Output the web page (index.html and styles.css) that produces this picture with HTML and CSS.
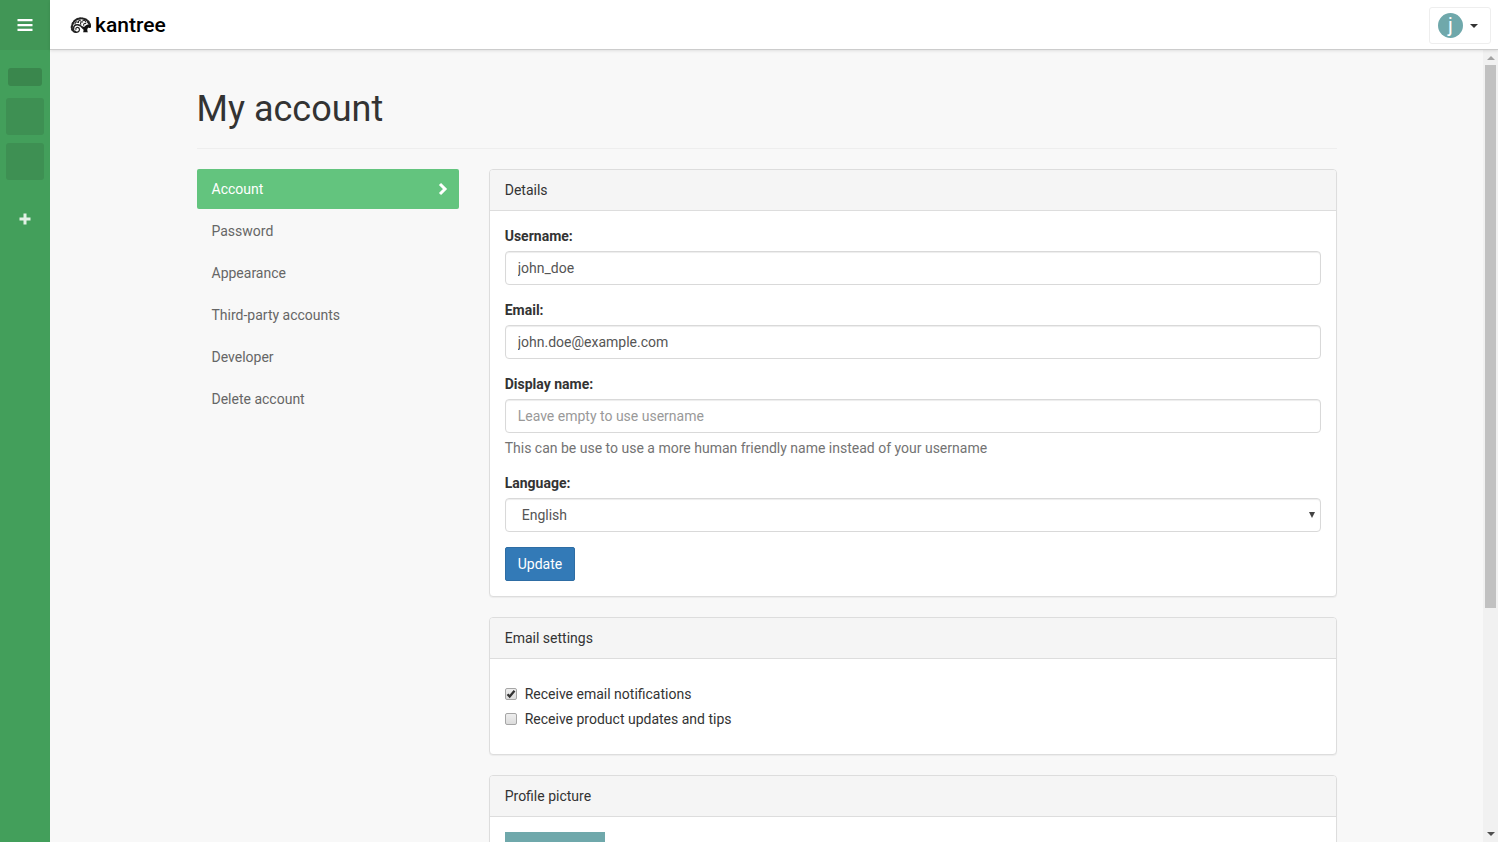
FILE: index.html
```html
<!DOCTYPE html>
<html lang="en">
<head>
<meta charset="utf-8">
<title>My account - Kantree</title>
<link rel="stylesheet" href="styles.css">
</head>
<body>
<aside class="sidebar">
  <button class="sidebar-toggle" type="button" aria-label="Menu">
    <svg width="16" height="14" viewBox="0 0 16 14"><path fill="#fff" d="M.5 1h15v2.300H.5zM.5 5.900h15v2.300H.5zM.5 10.800h15v2.300H.5z"/></svg>
  </button>
  <div class="org-label"></div>
  <div class="project-tile"></div>
  <div class="project-tile"></div>
  <button class="sidebar-add" type="button" aria-label="Add">
    <svg width="12" height="12" viewBox="0 0 12 12"><path fill="#e3f1e6" d="M4.500 .5h3v4h4v3h-4v4h-3v-4h-4v-3h4z"/></svg>
  </button>
</aside>
<div class="page">
  <header class="topbar">
    <a class="logo" href="#">
      <svg class="logo-tree" width="22" height="18" viewBox="0 0 22 18">
        <g fill="none" stroke="#222" stroke-linecap="round">
          <path stroke-width="2.200" stroke-dasharray="1.600 1.500" d="M5.500 15.800C2.500 15.300 1.200 12.600 2 9.800 3 5.200 6.500 2.600 10.800 2.400c4.700-.1 8.200 2.400 9.200 6.900"/>
          <path stroke-width="1.200" d="M6 16.300c3 .3 4.400-2.600 2.900-4.300-1.300-1.300-3.500-.4-3 1.300"/>
          <path stroke-width="1.500" d="M3.600 13.300C3.200 10.300 5 8.600 7.500 8.700c2.800.1 4.600 2 6 4"/>
          <path stroke-width="1.100" d="M5 8C4.800 6.300 6.200 5.300 7.500 6.200M8.500 6.500C8 4.800 9.500 4 10.600 4.900M10.800 8.300c-.9-1.600.5-3 1.900-2.300M13 4.600c1.300-.7 2.500 0 2.500 1.200M13.700 9.300c-.3-1.400.9-2.400 2-1.900M17 6c1.200.2 1.700 1.300 1.200 2.200"/>
        </g>
        <path fill="#111" d="M12.300 10c1.300 1 2 1.200 2.500.3.900-1.400 2.700-2 4.700-1.300 1.300.3 1.700 1.200 1.500 2.200-.3 1-1.600 1.100-2.200.3-1.200.5-1.600 1.400-1.500 2.400 0 1 .2 1.600.6 2.300h-4.800c.8-1.700.6-3.300-.8-6.200z"/>
      </svg>
      <span>kantree</span>
    </a>
    <button class="user-menu" type="button"><span class="avatar">j</span><span class="caret"></span></button>
  </header>
  <div class="viewport">
    <main class="content">
      <div class="container">
        <h1>My account</h1>
        <div class="columns">
          <nav class="menu">
            <a class="active" href="#">Account
              <svg width="10" height="14" viewBox="0 0 10 14"><path d="M2 2l5 5-5 5" fill="none" stroke="#fff" stroke-width="3"/></svg>
            </a>
            <a href="#">Password</a>
            <a href="#">Appearance</a>
            <a href="#">Third-party accounts</a>
            <a href="#">Developer</a>
            <a href="#">Delete account</a>
          </nav>
          <div class="panels">
            <section class="panel">
              <h2>Details</h2>
              <form class="panel-body">
                <div class="field">
                  <label for="username">Username:</label>
                  <input class="control" id="username" type="text" value="john_doe">
                </div>
                <div class="field">
                  <label for="email">Email:</label>
                  <input class="control" id="email" type="email" value="john.doe@example.com">
                </div>
                <div class="field">
                  <label for="display">Display name:</label>
                  <input class="control" id="display" type="text" placeholder="Leave empty to use username">
                  <p class="help">This can be use to use a more human friendly name instead of your username</p>
                </div>
                <div class="field">
                  <label for="language">Language:</label>
                  <select class="control" id="language"><option>English</option></select>
                </div>
                <button class="update" type="button">Update</button>
              </form>
            </section>
            <section class="panel">
              <h2>Email settings</h2>
              <div class="panel-body checks">
                <label><input type="checkbox" checked>Receive email notifications</label>
                <label><input type="checkbox">Receive product updates and tips</label>
              </div>
            </section>
            <section class="panel">
              <h2>Profile picture</h2>
              <div class="panel-body"><div class="picture"></div></div>
            </section>
          </div>
        </div>
      </div>
    </main>
    <div class="scrollbar" aria-hidden="true">
      <span class="arrow up"></span>
      <div class="track"><div class="thumb"></div></div>
      <span class="arrow down"></span>
    </div>
  </div>
</div>
</body>
</html>
```
FILE: styles.css
```css
* { box-sizing: border-box; }
body {
  margin: 0;
  height: 100vh;
  display: flex;
  overflow: hidden;
  background: #f8f8f8;
  color: #333;
  font: 14px/20px Roboto, "Liberation Sans", sans-serif;
}
button, input, select { font: inherit; margin: 0; }
button { cursor: pointer; }
a { color: inherit; text-decoration: none; }

.sidebar {
  flex: none;
  width: 50px;
  display: flex;
  flex-direction: column;
  align-items: center;
  background: #439f5b;
}
.sidebar button {
  border: 0;
  padding: 0;
  width: 100%;
  display: flex;
  align-items: center;
  justify-content: center;
  background: none;
}
.sidebar .sidebar-toggle { height: 50px; background: #419656; }
.org-label {
  width: 34px;
  height: 18px;
  margin: 18px 0 12px;
  border-radius: 3px;
  background: #3a874d;
}
.project-tile {
  width: 38px;
  height: 37px;
  margin-bottom: 8px;
  border-radius: 3px;
  background: #3e9053;
}
.sidebar .sidebar-add { height: 40px; margin-top: 11px; }

.page { flex: 1; min-width: 0; display: flex; flex-direction: column; }
.topbar {
  flex: none;
  height: 50px;
  display: flex;
  align-items: center;
  justify-content: space-between;
  padding: 0 7px 0 20px;
  background: #fff;
  border-bottom: 1px solid #ccc;
  box-shadow: 0 1px 3px rgba(0, 0, 0, .1);
  z-index: 1;
}
.logo {
  display: flex;
  align-items: center;
  gap: 3px;
  color: #000;
  font: 500 21px/28px Roboto, "Noto Sans", sans-serif;
}
.user-menu {
  width: 62px;
  height: 37px;
  margin-top: 2px;
  padding: 0 8px;
  display: flex;
  align-items: center;
  gap: 7px;
  background: #fff;
  border: 1px solid #eee;
  border-radius: 3px;
}
.avatar {
  width: 25px;
  height: 25px;
  margin-bottom: 1px;
  border-radius: 50%;
  background: #6fa8ab;
  color: #fff;
  font-size: 20px;
  line-height: 25px;
  text-align: center;
}
.caret {
  border: 4px solid transparent;
  border-top-color: #333;
  border-bottom: 0;
}

.viewport { flex: 1; min-height: 0; display: flex; }
.content { flex: 1; min-width: 0; overflow-y: auto; scrollbar-width: none; }
.container { max-width: 1170px; margin: 0 auto; padding: 39px 15px 20px; }
h1 {
  margin: 0 0 20px;
  padding-bottom: 19px;
  border-bottom: 1px solid #eee;
  font-size: 36px;
  font-weight: 400;
  line-height: 40px;
}
.columns { display: grid; grid-template-columns: 23% 1fr; gap: 30px; }
.menu { display: flex; flex-direction: column; gap: 2px; }
.menu a {
  display: flex;
  align-items: center;
  justify-content: space-between;
  height: 40px;
  padding: 0 11px 0 15px;
  border-radius: 2px;
  color: #666;
}
.menu .active { background: #63c47e; color: #fff; }

.panel {
  margin-bottom: 20px;
  background: #fff;
  border: 1px solid #ddd;
  border-radius: 4px;
  box-shadow: 0 1px 1px rgba(0, 0, 0, .05);
}
.panel h2 {
  margin: 0;
  padding: 10px 15px;
  border-bottom: 1px solid #ddd;
  border-radius: 3px 3px 0 0;
  background: #f5f5f5;
  font-size: 14px;
  font-weight: 400;
}
.panel-body { padding: 15px; }
.field { margin-bottom: 15px; }
.field label { display: block; margin-bottom: 5px; font-weight: 700; }
.control {
  display: block;
  width: 100%;
  height: 34px;
  padding: 6px 12px;
  border: 1px solid #d9d9d9;
  border-radius: 4px;
  background: #fff;
  color: #555;
  box-shadow: inset 0 1px 1px rgba(0, 0, 0, .075);
}
.control::placeholder { color: #999; opacity: 1; }
select.control {
  appearance: none;
  padding-left: 16px;
  background: #fff url("data:image/svg+xml,%3Csvg xmlns='http://www.w3.org/2000/svg' width='6' height='6'%3E%3Cpath fill='%23444' d='M0 0h6L3 6z'/%3E%3C/svg%3E") no-repeat right 5px center;
}
.help { margin: 5px 0 0; color: #737373; }
.update {
  display: block;
  height: 34px;
  padding: 0 12px;
  border: 1px solid #2e6da4;
  border-radius: 2px;
  background: #337ab7;
  color: #fff;
}
.checks { display: flex; flex-direction: column; gap: 5px; padding: 25px 15px; }
.checks label { display: flex; align-items: center; gap: 8px; }
.checks input {
  appearance: none;
  width: 12px;
  height: 12px;
  border: 1px solid #a6a6a6;
  border-radius: 2px;
  background: linear-gradient(#eee, #dcdcdc);
}
.checks input:checked {
  background: url("data:image/svg+xml,%3Csvg xmlns='http://www.w3.org/2000/svg' width='10' height='10'%3E%3Cpath fill='none' stroke='%23333' stroke-width='2.300' d='M1.500 5.300l2.200 2.200L8.500 1.800'/%3E%3C/svg%3E") center no-repeat, linear-gradient(#eee, #dcdcdc);
}
.picture { width: 100px; height: 100px; background: #6fa8ab; }

.scrollbar {
  flex: none;
  width: 15px;
  display: flex;
  flex-direction: column;
  align-items: center;
  background: #f1f1f1;
}
.arrow { border: 4px solid transparent; }
.up { margin: 6px 0 5px; border-top: 0; border-bottom-color: #a3a3a3; }
.down { margin: 5px 0 6px; border-bottom: 0; border-top-color: #505050; }
.track { flex: 1; width: 11px; }
.thumb { height: 71.3%; background: #c1c1c1; }
```
